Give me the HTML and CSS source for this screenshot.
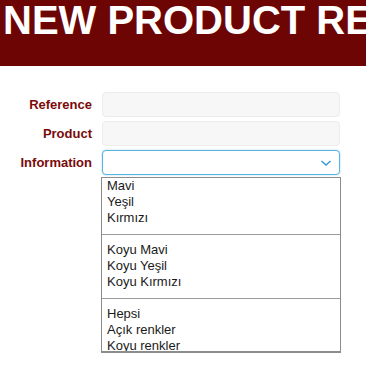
FILE: index.html
```html
<!DOCTYPE html>
<html lang="en">
<head>
    <meta charset="UTF-8">
    <meta name="viewport" content="width=device-width, initial-scale=1.0">
    <title>New Product Request</title>
    <link rel="stylesheet" href="styles.css">
</head>
<body>
    <div class="header">
        <h1 class="title">NEW PRODUCT REQUEST</h1>
    </div>
    <form class="form">
        <label class="label" for="ref">Reference</label>
        <input class="field" id="ref" type="text">

        <label class="label" for="prod">Product</label>
        <input class="field" id="prod" type="text">

        <label class="label">Information</label>
        <div class="select">
            <svg class="chevron" width="12" height="8" viewBox="0 0 12 8">
                <path d="M1.5 2 L6 6 L10.5 2" fill="none" stroke="#3a9ad9" stroke-width="1.5"/>
            </svg>
        </div>

        <div class="dropdown">
            <div class="option">Mavi</div>
            <div class="option">Yeşil</div>
            <div class="option">Kırmızı</div>
            <div class="sep"></div>
            <div class="option">Koyu Mavi</div>
            <div class="option">Koyu Yeşil</div>
            <div class="option">Koyu Kırmızı</div>
            <div class="sep"></div>
            <div class="option">Hepsi</div>
            <div class="option">Açık renkler</div>
            <div class="option">Koyu renkler</div>
        </div>
    </form>
</body>
</html>
```

FILE: styles.css
```css
body {
    margin: 0;
    font-family: "Liberation Sans", Arial, sans-serif;
    background-color: #ffffff;
}
.header {
    background-color: #6d0505;
    height: 66px;
    overflow: hidden;
}
.title {
    margin: 0;
    padding-left: 3px;
    font-size: 40px;
    line-height: 40px;
    font-weight: bold;
    color: #ffffff;
    white-space: nowrap;
}
.form {
    display: grid;
    grid-template-columns: 92px 238px;
    column-gap: 10px;
    row-gap: 4px;
    margin-top: 26px;
}
.label {
    font-size: 13px;
    font-weight: bold;
    color: #7a0a0a;
    text-align: right;
    line-height: 25px;
}
.field {
    box-sizing: border-box;
    height: 25px;
    width: 238px;
    margin: 0;
    background-color: #f7f7f7;
    border: 1px solid #ececec;
    border-radius: 4px;
}
.select {
    box-sizing: border-box;
    height: 25px;
    border: 1px solid #5bb3e0;
    border-radius: 4px;
    box-shadow: 0 0 2px rgba(91,179,224,0.6);
    background-color: #ffffff;
    display: flex;
    justify-content: flex-end;
    align-items: center;
    padding-right: 7px;
}
.dropdown {
    grid-column: 2;
    margin-top: -2px;
    margin-left: -1px;
    width: 240px;
    height: 176px;
    box-sizing: border-box;
    border: 1px solid #8c8c8c;
    border-bottom-width: 2px;
    background-color: #ffffff;
    overflow: hidden;
    font-size: 13px;
    color: #1a1a1a;
}
.option {
    height: 16px;
    line-height: 16px;
    padding-left: 5px;
}
.sep {
    height: 16px;
    display: flex;
    align-items: center;
}
.sep::before {
    content: "";
    flex: 1;
    border-top: 1px solid #9a9a9a;
}
```
